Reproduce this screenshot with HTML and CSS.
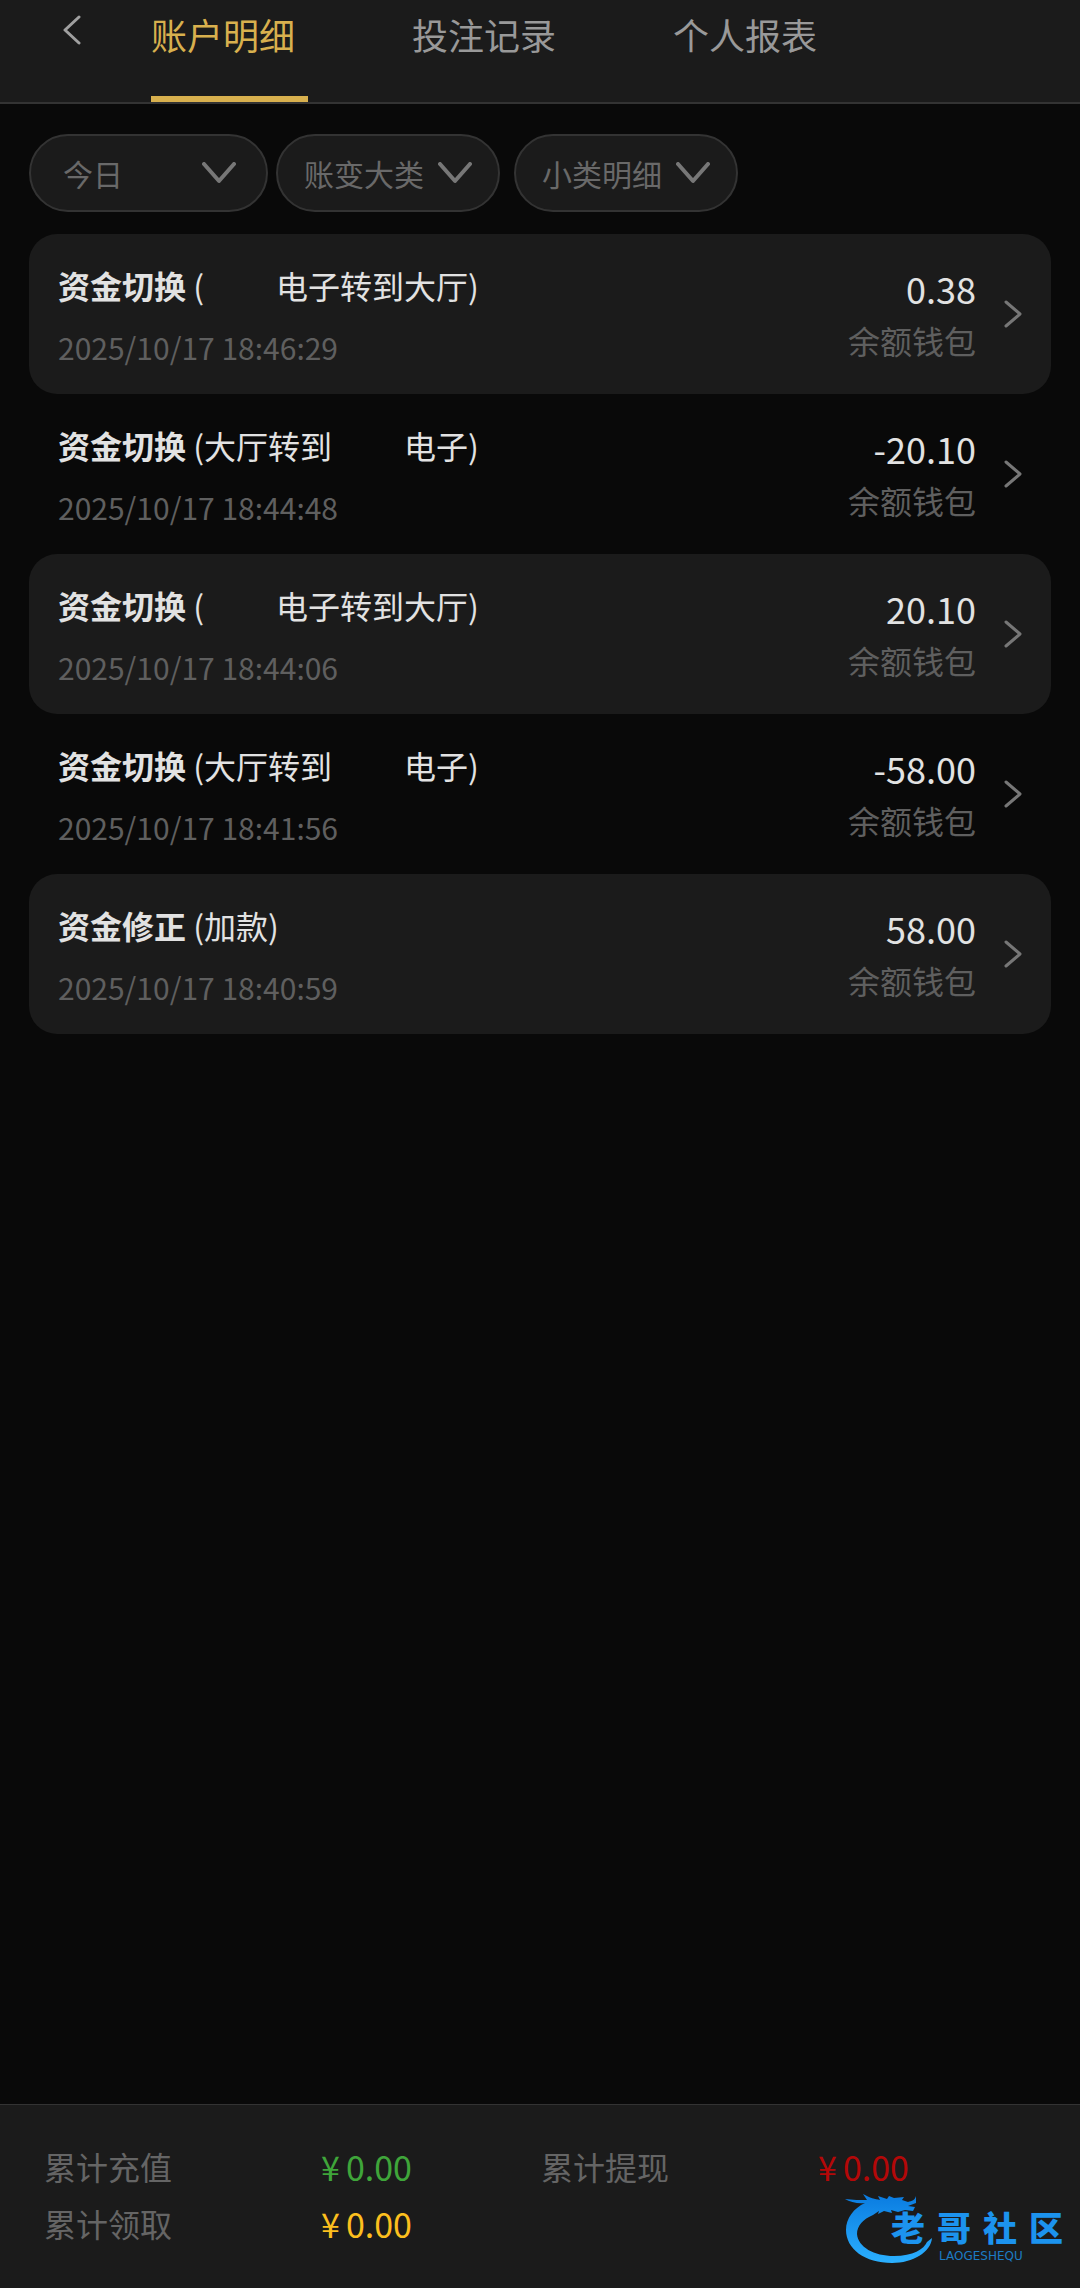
FILE: index.html
```html
<!DOCTYPE html>
<html lang="zh-CN">
<head>
  <meta charset="UTF-8">
  <meta name="viewport" content="width=device-width, initial-scale=1.0">
  <title>账户明细</title>
  <link rel="stylesheet" href="styles.css">
</head>
<body>

  <header class="header">
    <button class="back" aria-label="返回">
      <svg width="18" height="30" viewBox="0 0 18 30"><path d="M16 2 L2 15 L16 28"/></svg>
    </button>
    <nav class="tabs">
      <button class="tab active">账户明细</button>
      <button class="tab">投注记录</button>
      <button class="tab">个人报表</button>
    </nav>
  </header>

  <!-- Filters -->
  <div class="filters">
    <div class="filter filter-date">
      <select aria-label="日期"><option>今日</option></select>
      <svg width="34" height="22" viewBox="0 0 34 22"><path d="M2 2 L17 19 L32 2"/></svg>
    </div>
    <div class="filter">
      <select aria-label="账变大类"><option>账变大类</option></select>
      <svg width="34" height="22" viewBox="0 0 34 22"><path d="M2 2 L17 19 L32 2"/></svg>
    </div>
    <div class="filter">
      <select aria-label="小类明细"><option>小类明细</option></select>
      <svg width="34" height="22" viewBox="0 0 34 22"><path d="M2 2 L17 19 L32 2"/></svg>
    </div>
  </div>

  <!-- Records -->
  <main class="records">
    <a class="record" href="#">
      <div class="info">
        <p class="title"><b>资金切换</b> (<span class="blank"></span>电子转到大厅)</p>
        <p class="time">2025/10/17 18:46:29</p>
      </div>
      <div class="sum">
        <p class="amount">0.38</p>
        <p class="wallet">余额钱包</p>
      </div>
      <svg class="arrow" width="18" height="28" viewBox="0 0 18 28"><path d="M2 2 L16 14 L2 26"/></svg>
    </a>
    <a class="record" href="#">
      <div class="info">
        <p class="title"><b>资金切换</b> (大厅转到<span class="blank"></span>电子)</p>
        <p class="time">2025/10/17 18:44:48</p>
      </div>
      <div class="sum">
        <p class="amount">-20.10</p>
        <p class="wallet">余额钱包</p>
      </div>
      <svg class="arrow" width="18" height="28" viewBox="0 0 18 28"><path d="M2 2 L16 14 L2 26"/></svg>
    </a>
    <a class="record" href="#">
      <div class="info">
        <p class="title"><b>资金切换</b> (<span class="blank"></span>电子转到大厅)</p>
        <p class="time">2025/10/17 18:44:06</p>
      </div>
      <div class="sum">
        <p class="amount">20.10</p>
        <p class="wallet">余额钱包</p>
      </div>
      <svg class="arrow" width="18" height="28" viewBox="0 0 18 28"><path d="M2 2 L16 14 L2 26"/></svg>
    </a>
    <a class="record" href="#">
      <div class="info">
        <p class="title"><b>资金切换</b> (大厅转到<span class="blank"></span>电子)</p>
        <p class="time">2025/10/17 18:41:56</p>
      </div>
      <div class="sum">
        <p class="amount">-58.00</p>
        <p class="wallet">余额钱包</p>
      </div>
      <svg class="arrow" width="18" height="28" viewBox="0 0 18 28"><path d="M2 2 L16 14 L2 26"/></svg>
    </a>
    <a class="record" href="#">
      <div class="info">
        <p class="title"><b>资金修正</b> (加款)</p>
        <p class="time">2025/10/17 18:40:59</p>
      </div>
      <div class="sum">
        <p class="amount">58.00</p>
        <p class="wallet">余额钱包</p>
      </div>
      <svg class="arrow" width="18" height="28" viewBox="0 0 18 28"><path d="M2 2 L16 14 L2 26"/></svg>
    </a>
  </main>

  <!-- Totals -->
  <footer class="totals">
    <div class="total">
      <span class="label">累计充值</span>
      <span class="value green"><span>¥</span><span>0.00</span></span>
    </div>
    <div class="total">
      <span class="label">累计提现</span>
      <span class="value red"><span>¥</span><span>0.00</span></span>
    </div>
    <div class="total">
      <span class="label">累计领取</span>
      <span class="value yellow"><span>¥</span><span>0.00</span></span>
    </div>

    <div class="brand">
      <svg class="dragon" width="90" height="72" viewBox="0 0 90 72">
        <defs>
          <linearGradient id="blue" x1="0" y1="0" x2="0" y2="1">
            <stop offset="0" stop-color="#0a7be0"/>
            <stop offset="1" stop-color="#2bb0ff"/>
          </linearGradient>
        </defs>
        <path fill="url(#blue)" d="M87 46 C86 60 68 71 47 71 C20 71 1 57 1 38 C1 26 9 16 20 11 C13 12 5 10 0 7 C8 8 15 8 22 8 L18 2 C25 6 30 7 35 8 L33 4 L42 7 L44 4 L49 6 L59 5 L57 8 L63 10 C67 9 70 8 71 4 L71 11 L63 14 L70 15 L68 19 L60 18 L53 20 L46 18 L47 21 L39 19 L33 22 L34 19 L28 23 C18 27 12 34 12 42 C13 55 29 64 49 64 C68 64 79 57 82 50 Z"/>
      </svg>
      <div class="brand-text">
        <div class="brand-name"><span>老</span><span>哥</span><span>社</span><span>区</span></div>
        <div class="brand-sub">LAOGESHEQU</div>
      </div>
    </div>
  </footer>

</body>
</html>
```
FILE: styles.css
```css
* {
  margin: 0;
  padding: 0;
  box-sizing: border-box;
}

body {
  font-family: "Noto Sans CJK SC", sans-serif;
  display: flex;
  flex-direction: column;
  min-height: 100vh;
  background-color: #090909;
  color: #e2e2e2;
}

button,
select {
  font-family: inherit;
  background: none;
  border: none;
  cursor: pointer;
}

svg {
  fill: none;
  stroke-linecap: round;
  stroke-linejoin: round;
}

/* Header */
.header {
  display: flex;
  align-items: flex-start;
  height: 104px;
  padding-left: 48px;
  background-color: #1b1b1b;
  border-bottom: 2px solid #333;
}

.back {
  width: 48px;
  height: 64px;
}

.back svg {
  stroke: #a0a0a0;
  stroke-width: 3;
}

.tabs {
  display: flex;
  gap: 104px;
  height: 102px;
  margin-left: 55px;
}

.tab {
  display: flex;
  align-items: flex-start;
  width: 157px;
  padding-top: 10px;
  color: #999;
  font-size: 36px;
  line-height: 48px;
  border-bottom: 6px solid transparent;
}

.tab.active {
  color: #d8b04e;
  border-bottom-color: #d8b04e;
}

/* Filters */
.filters {
  display: flex;
  padding: 30px 29px 22px;
}

.filter {
  display: flex;
  align-items: center;
  height: 78px;
  width: 224px;
  margin-right: 14px;
  padding: 0 26px;
  background-color: #1b1b1b;
  border: 2px solid #333;
  border-radius: 40px;
}

.filter-date {
  width: 239px;
  margin-right: 8px;
  padding: 0 30px 0 32px;
}

.filter select {
  flex: 1;
  min-width: 0;
  appearance: none;
  color: #696969;
  font-size: 30px;
  line-height: 44px;
  outline: none;
}

.filter svg {
  flex: none;
  margin-left: -20px;
  stroke: #777;
  stroke-width: 4;
  pointer-events: none;
}

/* Records */
.records {
  padding: 0 29px;
}

.record {
  display: flex;
  align-items: center;
  height: 160px;
  padding: 0 29px;
  border-radius: 28px;
  color: inherit;
  text-decoration: none;
}

.record:nth-child(odd) {
  background-color: #1b1b1b;
}

.info {
  flex: 1;
  padding-top: 2px;
}

.title {
  font-size: 32px;
  line-height: 48px;
  margin-bottom: 16px;
}

.blank {
  display: inline-block;
  width: 72px;
}

.time {
  color: #5f5f5f;
  font-size: 30px;
  line-height: 44px;
}

.sum {
  padding-bottom: 2px;
  text-align: right;
}

.amount {
  margin-bottom: 2px;
  font-size: 36px;
  line-height: 52px;
}

.wallet {
  color: #5f5f5f;
  font-size: 32px;
  line-height: 48px;
}

.arrow {
  margin-left: 28px;
  stroke: #777;
  stroke-width: 3;
}

/* Totals */
.totals {
  position: relative;
  display: grid;
  grid-template-columns: 1fr 1fr;
  align-content: start;
  height: 184px;
  margin-top: auto;
  padding: 33px 42px 0 44px;
  background-color: #1b1b1b;
  border-top: 1px solid #333;
}

.total {
  display: flex;
  line-height: 57px;
}

.label {
  width: 277px;
  color: #656565;
  font-size: 32px;
}

.value {
  display: flex;
  gap: 6px;
  font-size: 34px;
}

.green {
  color: #3fa53a;
}

.red {
  color: #b40808;
}

.yellow {
  color: #fcbf1e;
}

/* Logo lies over the totals */
.brand {
  position: absolute;
  right: 17px;
  bottom: 24px;
  display: flex;
}

.brand-text {
  margin-left: -44px;
  padding-top: 16px;
}

.brand-name {
  display: flex;
  gap: 12px;
  color: #1c93ee;
  font-size: 34px;
  font-weight: 900;
  line-height: 38px;
}

.brand-sub {
  padding: 2px 0 0 48px;
  color: #1c7cc4;
  font-family: "DejaVu Sans", sans-serif;
  font-size: 12px;
  line-height: 16px;
}
```
